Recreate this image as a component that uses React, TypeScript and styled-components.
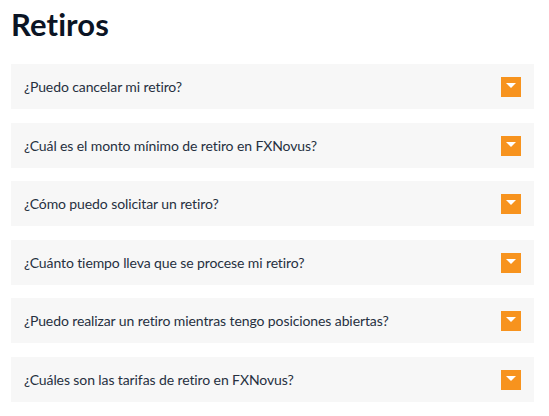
import React from "react";
import styled, { createGlobalStyle } from "styled-components";

const GlobalStyle = createGlobalStyle`
  html, body { margin: 0; padding: 0; background: #ffffff; }
  body { font-family: Lato, "Open Sans", sans-serif; }
`;

const Page = styled.div`
  padding: 0 15px 0 11px;
`;

const Title = styled.h1`
  margin: 0;
  padding-top: 4px;
  height: 64px;
  font-family: Lato, "Open Sans", sans-serif;
  font-weight: 700;
  font-size: 31px;
  line-height: 40px;
  color: #0b1424;
  letter-spacing: 0.1px;
  box-sizing: border-box;
`;

const List = styled.div`
  display: flex;
  flex-direction: column;
  gap: 13.6px;
`;

const Item = styled.div`
  height: 45px;
  background: #f7f7f7;
  display: flex;
  align-items: center;
  justify-content: space-between;
  padding: 0 13px 0 13px;
  box-sizing: border-box;
`;

const Question = styled.span`
  font-family: Lato, "Open Sans", sans-serif;
  font-size: 14px;
  letter-spacing: -0.1px;
  color: #26303f;
`;

const Toggle = styled.span`
  width: 20px;
  height: 20px;
  background: #f7931e;
  display: flex;
  align-items: center;
  justify-content: center;
  margin-top: 1px;
`;

const Caret = () => (
  <svg width="10" height="5" viewBox="0 0 10 5" style={{ marginTop: -3 }}>
    <path d="M0 0 H10 L5 5 Z" fill="#ffffff" />
  </svg>
);

const questions = [
  "¿Puedo cancelar mi retiro?",
  "¿Cuál es el monto mínimo de retiro en FXNovus?",
  "¿Cómo puedo solicitar un retiro?",
  "¿Cuánto tiempo lleva que se procese mi retiro?",
  "¿Puedo realizar un retiro mientras tengo posiciones abiertas?",
  "¿Cuáles son las tarifas de retiro en FXNovus?",
];

export default function App() {
  return (
    <>
      <GlobalStyle />
      <Page>
        <Title>Retiros</Title>
        <List>
          {questions.map((q) => (
            <Item key={q}>
              <Question>{q}</Question>
              <Toggle>
                <Caret />
              </Toggle>
            </Item>
          ))}
        </List>
      </Page>
    </>
  );
}
